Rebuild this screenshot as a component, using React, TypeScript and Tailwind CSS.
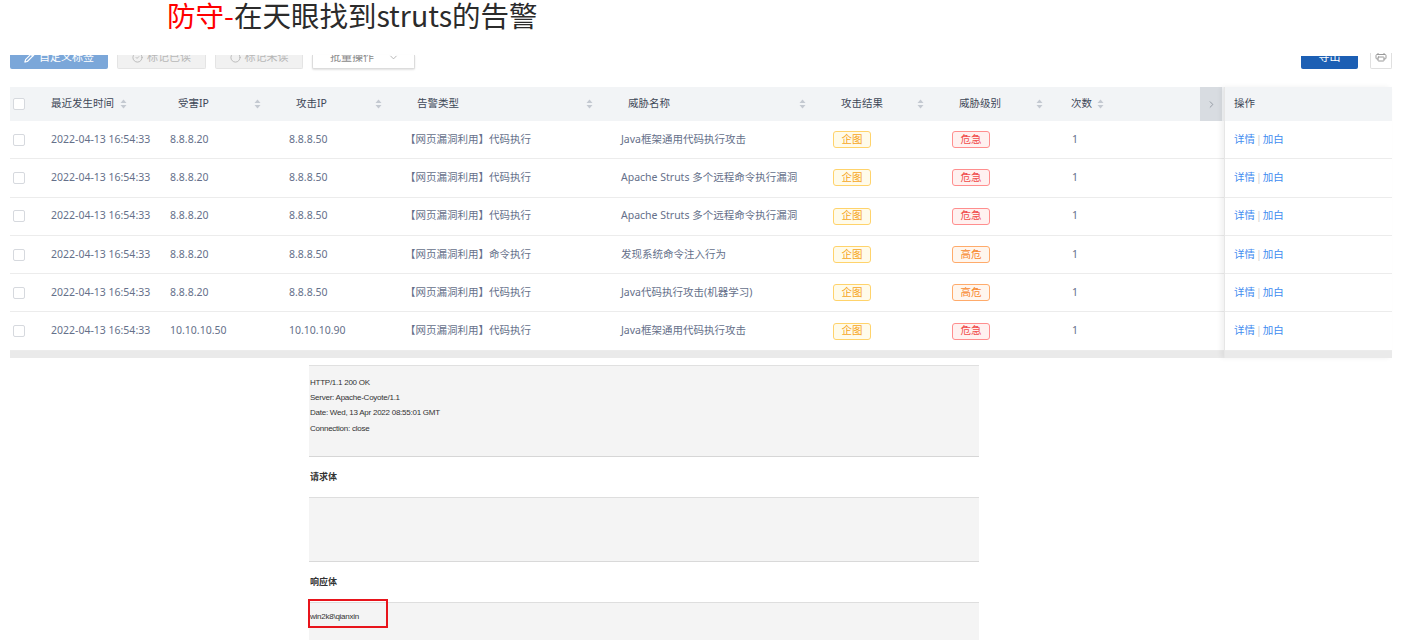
import { Pencil, CircleCheck, Circle, ChevronDown, ChevronRight, Printer } from 'lucide-react';

type Row = {
  time: string;
  victim: string;
  attacker: string;
  type: string;
  name: string;
  level: '危急' | '高危';
};

const rows: Row[] = [
  { time: '2022-04-13 16:54:33', victim: '8.8.8.20', attacker: '8.8.8.50', type: '【网页漏洞利用】代码执行', name: 'Java框架通用代码执行攻击', level: '危急' },
  { time: '2022-04-13 16:54:33', victim: '8.8.8.20', attacker: '8.8.8.50', type: '【网页漏洞利用】代码执行', name: 'Apache Struts 多个远程命令执行漏洞', level: '危急' },
  { time: '2022-04-13 16:54:33', victim: '8.8.8.20', attacker: '8.8.8.50', type: '【网页漏洞利用】代码执行', name: 'Apache Struts 多个远程命令执行漏洞', level: '危急' },
  { time: '2022-04-13 16:54:33', victim: '8.8.8.20', attacker: '8.8.8.50', type: '【网页漏洞利用】命令执行', name: '发现系统命令注入行为', level: '高危' },
  { time: '2022-04-13 16:54:33', victim: '8.8.8.20', attacker: '8.8.8.50', type: '【网页漏洞利用】代码执行', name: 'Java代码执行攻击(机器学习)', level: '高危' },
  { time: '2022-04-13 16:54:33', victim: '10.10.10.50', attacker: '10.10.10.90', type: '【网页漏洞利用】代码执行', name: 'Java框架通用代码执行攻击', level: '危急' },
];

const grid = 'grid grid-cols-[35px_120px_118px_121px_211px_213px_118px_119px_135px_22px]';

function Sort() {
  return (
    <svg width="7" height="10" viewBox="0 0 7 10" className="shrink-0">
      <path d="M3.5 0.5 L6.5 4 H0.5 Z" fill="#c4c9d1" />
      <path d="M3.5 9.5 L6.5 6 H0.5 Z" fill="#c4c9d1" />
    </svg>
  );
}

function Check() {
  return <div className="w-[12px] h-[12px] rounded-[2px] border border-[#d6d9de] bg-white ml-[3px]" />;
}

function HeadCell({ label }: { label: string }) {
  return (
    <div className="flex items-center justify-between pl-[13px] pr-[22px]">
      <span>{label}</span>
      <Sort />
    </div>
  );
}

function Tag({ text }: { text: string }) {
  const cls =
    text === '企图'
      ? 'border-[#ffd36b] bg-[#fffbea] text-[#f6a623]'
      : text === '危急'
        ? 'border-[#ff8e8e] bg-[#fff1f0] text-[#f04b4b]'
        : 'border-[#ffab6b] bg-[#fff6ee] text-[#f7882f]';
  return (
    <div className={`w-[38px] h-[17px] rounded-[3px] border flex items-center justify-center text-[10.5px] ${cls}`}>
      {text}
    </div>
  );
}

export default function App() {
  return (
    <div className="w-[1402px] h-[640px] overflow-hidden bg-white font-[family-name:Noto_Sans,Noto_Sans_CJK_SC,sans-serif]">
      {/* title */}
      <div className="-mt-[6px] h-[61px] pl-[167px] text-[28.5px] leading-[42px] text-[#2b2b2b] font-[family-name:Noto_Sans_CJK_SC,sans-serif]">
        <span className="text-[#ff0000]">防守-</span>在天眼找到struts的告警
      </div>

      {/* toolbar, cut off at the top by the screenshot */}
      <div className="flex justify-between items-end px-[10px] h-[14px] text-[11px]">
        <div className="flex gap-[9px] h-[14px]">
          <div className="w-[98px] h-[14px] overflow-hidden rounded-b-[2px] bg-[#7ba7d9] text-white flex items-start justify-center">
            <span className="-mt-[4px] leading-[12px] flex items-center gap-[4px]">
              <Pencil size={11} strokeWidth={2.5} />
              自定义标签
            </span>
          </div>
          <div className="w-[89px] h-[14px] overflow-hidden rounded-b-[2px] bg-[#f1f1f1] border border-t-0 border-[#e4e4e4] text-[#b8b8b8] flex items-start justify-center">
            <span className="-mt-[4px] leading-[12px] flex items-center gap-[4px]">
              <CircleCheck size={11} />
              标记已读
            </span>
          </div>
          <div className="w-[88px] h-[14px] overflow-hidden rounded-b-[2px] bg-[#f1f1f1] border border-t-0 border-[#e4e4e4] text-[#b8b8b8] flex items-start justify-center">
            <span className="-mt-[4px] leading-[12px] flex items-center gap-[4px]">
              <Circle size={11} />
              标记未读
            </span>
          </div>
          <div className="w-[103px] h-[14px] overflow-hidden rounded-b-[2px] bg-white border border-t-0 border-[#dcdcdc] shadow-[0_1px_2px_rgba(0,0,0,0.12)] text-[#8a8a8a] flex items-start justify-between pl-[17px] pr-[15px]">
            <span className="-mt-[4px] leading-[12px]">批量操作</span>
            <ChevronDown size={11} className="-mt-[3px] text-[#b0b0b0]" />
          </div>
        </div>
        <div className="flex items-end gap-[12px]">
          <div className="w-[57px] h-[13px] overflow-hidden rounded-b-[2px] bg-[#1c5fb4] text-white flex items-start justify-center">
            <span className="-mt-[5px] leading-[12px]">导出</span>
          </div>
          <div className="w-[22px] h-[16px] overflow-hidden rounded-b-[2px] bg-white border border-t-0 border-[#e0e0e0] flex items-start justify-center text-[#9a9a9a]">
            <Printer size={12} className="-mt-[3px]" />
          </div>
        </div>
      </div>

      {/* table */}
      <div className="mt-[18px] mx-[10px] flex text-[10.5px]">
        <div className="flex-1">
          <div className={`${grid} h-[34px] bg-[#f2f4f6] text-[#3e4756] items-stretch`}>
            <div className="flex items-center">
              <Check />
            </div>
            <div className="flex items-center gap-[6px] pl-[6px]">
              <span>最近发生时间</span>
              <Sort />
            </div>
            <HeadCell label="受害IP" />
            <HeadCell label="攻击IP" />
            <HeadCell label="告警类型" />
            <HeadCell label="威胁名称" />
            <HeadCell label="攻击结果" />
            <HeadCell label="威胁级别" />
            <div className="flex items-center gap-[5px] pl-[6px]">
              <span>次数</span>
              <Sort />
            </div>
            <div className="bg-[#d8dce1] flex items-center justify-center text-[#8f96a0]">
              <ChevronRight size={11} />
            </div>
          </div>
          {rows.map((r, i) => (
            <div key={i} className={`${grid} h-[38.3px] border-b border-[#ececec] text-[#65708a] items-center`}>
              <div className="flex items-center">
                <Check />
              </div>
              <div className="pl-[6px] whitespace-nowrap">{r.time}</div>
              <div className="pl-[5px]">{r.victim}</div>
              <div className="pl-[6px]">{r.attacker}</div>
              <div className="pl-[1px] whitespace-nowrap">{r.type}</div>
              <div className="pl-[6px] whitespace-nowrap">{r.name}</div>
              <div className="pl-[5px]">
                <Tag text="企图" />
              </div>
              <div className="pl-[6px]">
                <Tag text={r.level} />
              </div>
              <div className="pl-[7px]">1</div>
              <div />
            </div>
          ))}
          <div className="h-[7px] bg-[#eaeaea]" />
        </div>

        {/* fixed operation column */}
        <div className="w-[168px] border-l border-[#e6e6e6] shadow-[-3px_0_5px_rgba(0,0,0,0.06)] relative z-10">
          <div className="h-[34px] bg-[#f2f4f6] text-[#3e4756] flex items-center pl-[9px]">操作</div>
          {rows.map((_, i) => (
            <div key={i} className="h-[38.3px] border-b border-[#ececec] bg-white flex items-center pl-[9px] text-[#3f8cf0]">
              详情<span className="text-[#d0d0d0] mx-[1px]">|</span>加白
            </div>
          ))}
          <div className="h-[7px] bg-[#eaeaea]" />
        </div>
      </div>

      {/* detail panel */}
      <div className="mt-[7px] ml-[309px] w-[670px] text-[8px] text-[#333]">
        <div className="h-[92px] bg-[#f4f4f4] border-t border-[#e0e0e0] border-b border-b-[#d6d6d6] pt-[9px] pl-[1px] leading-[15.3px] tracking-[-0.25px] font-[family-name:Liberation_Sans,sans-serif]">
          <div>HTTP/1.1 200 OK</div>
          <div>Server: Apache-Coyote/1.1</div>
          <div>Date: Wed, 13 Apr 2022 08:55:01 GMT</div>
          <div>Connection: close</div>
        </div>
        <div className="h-[40px] flex items-center pl-[1px] text-[9px] font-bold text-[#333]">请求体</div>
        <div className="h-[65px] bg-[#f4f4f4] border-t border-[#dedede] border-b border-b-[#d9d9d9]" />
        <div className="h-[40px] flex items-center pl-[1px] text-[9px] font-bold text-[#333]">响应体</div>
        <div className="h-[50px] bg-[#f4f4f4] border-t border-[#dedede]">
          <div className="-mt-[4px] -ml-[1px] w-[80px] h-[29px] border-2 border-[#e8141b] flex items-end pb-[4px] leading-[10px] tracking-[-0.25px] font-[family-name:Liberation_Sans,sans-serif]">
            win2k8\qianxin
          </div>
        </div>
      </div>
    </div>
  );
}
